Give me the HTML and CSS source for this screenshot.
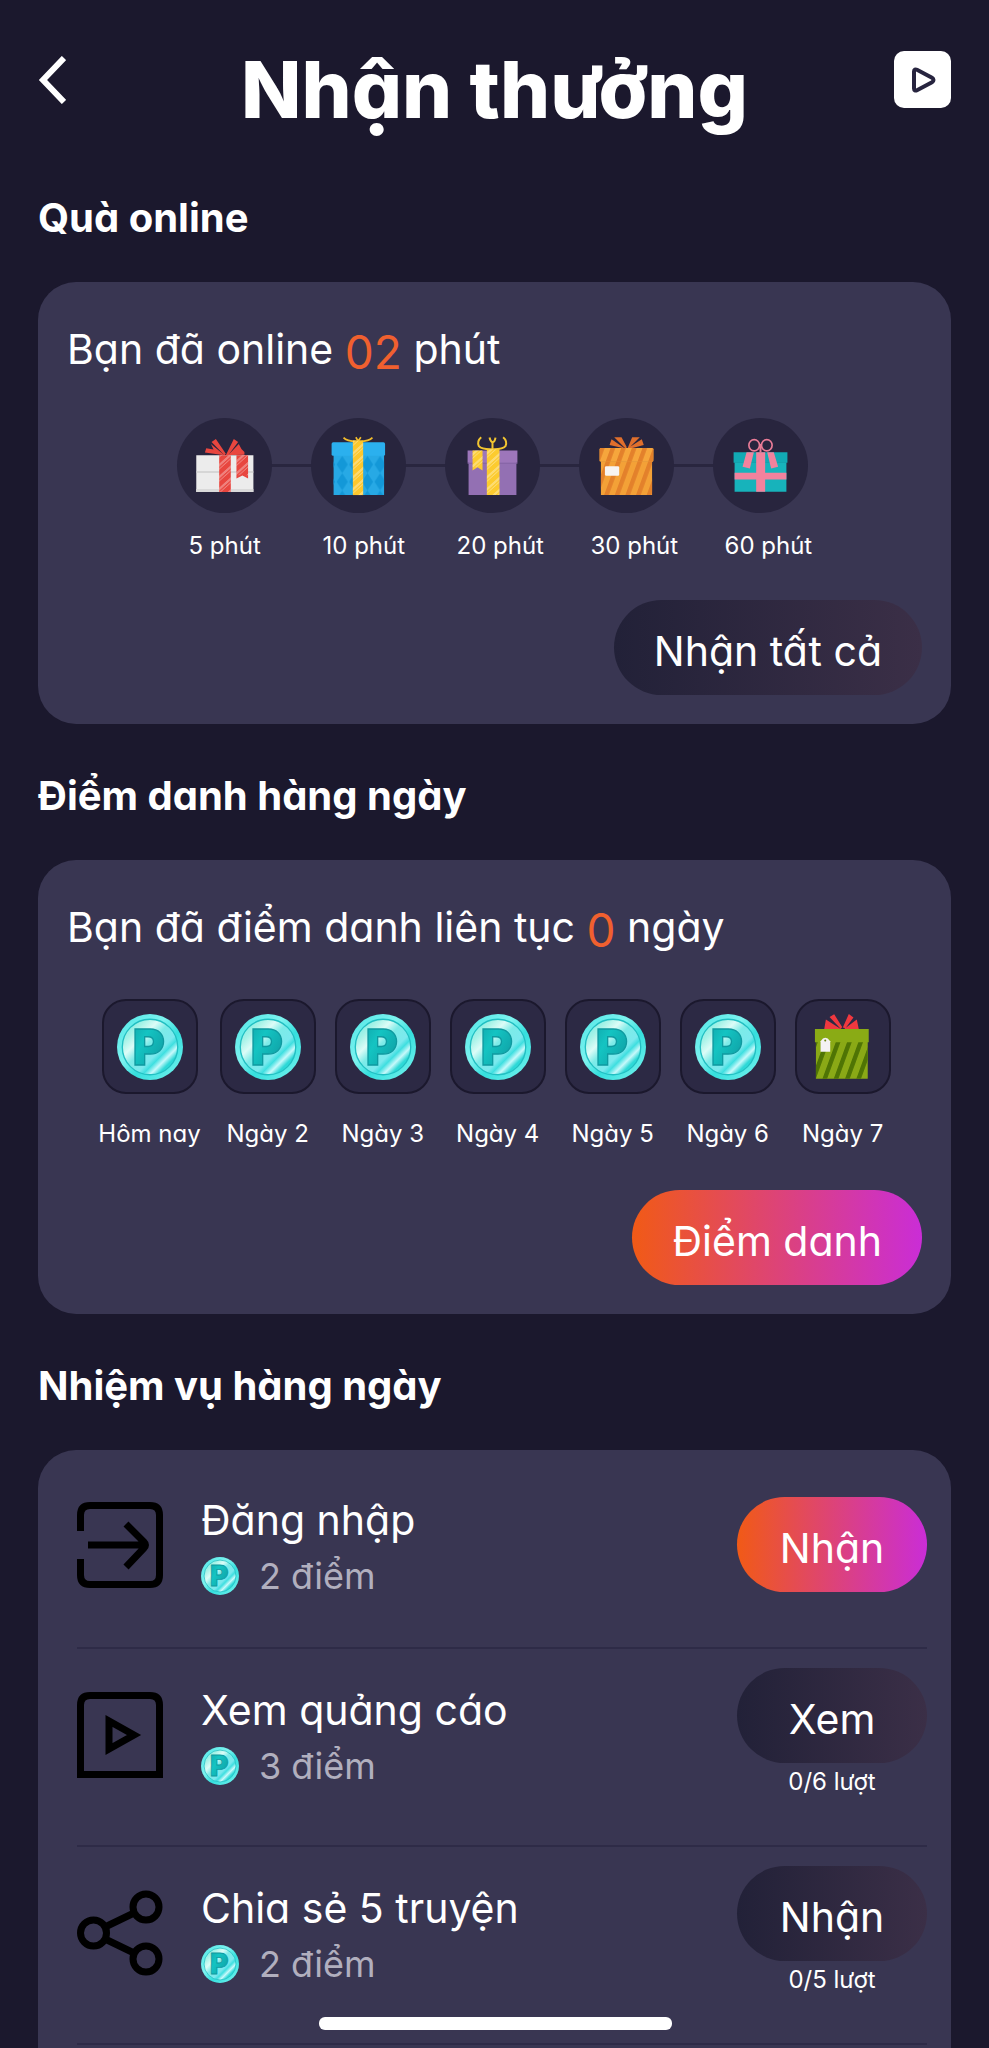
FILE: index.html
```html
<!DOCTYPE html>
<html lang="vi">
<head>
<meta charset="utf-8">
<meta name="viewport" content="width=device-width, initial-scale=1">
<title>Nhận thưởng</title>
<link rel="stylesheet" href="styles.css">
</head>
<body>
<svg class="defs" aria-hidden="true">
  <defs>
    <linearGradient id="coin-face" x1="0" y1="0" x2="1" y2="1">
      <stop offset="0" stop-color="#5fe9e2"/>
      <stop offset=".22" stop-color="#a8f3e8"/>
      <stop offset=".34" stop-color="#dcfcf7"/>
      <stop offset=".46" stop-color="#7cebe8"/>
      <stop offset=".62" stop-color="#7be9ee"/>
      <stop offset=".68" stop-color="#3fdfe0"/>
      <stop offset=".75" stop-color="#c8f9fb"/>
      <stop offset=".82" stop-color="#2bd8d6"/>
      <stop offset="1" stop-color="#54e8e4"/>
    </linearGradient>
    <linearGradient id="coin-rim" x1="0" y1="0" x2="1" y2="1">
      <stop offset="0" stop-color="#4fe6e6"/>
      <stop offset=".4" stop-color="#7df3ef"/>
      <stop offset=".6" stop-color="#35dfdd"/>
      <stop offset="1" stop-color="#7af5f0"/>
    </linearGradient>
    <linearGradient id="coin-letter" x1="0" y1="0" x2="1" y2="1">
      <stop offset="0" stop-color="#0fa5a9"/>
      <stop offset=".35" stop-color="#14c4c2"/>
      <stop offset="1" stop-color="#0d929a"/>
    </linearGradient>
    <pattern id="diamonds" width="38" height="52" patternUnits="userSpaceOnUse" x="75" y="114">
      <path d="M19 0 36 26 19 52 2 26z" fill="#1398d8"/>
    </pattern>
    <pattern id="orange-stripes" width="32" height="40" patternUnits="userSpaceOnUse" patternTransform="skewX(-20)">
      <rect width="14" height="40" fill="#e3812b"/>
    </pattern>
    <pattern id="green-stripes" width="34" height="40" patternUnits="userSpaceOnUse" patternTransform="skewX(-20)">
      <rect width="14" height="40" fill="#4f7404"/>
    </pattern>
    <pattern id="light-stripes" width="40" height="36" patternUnits="userSpaceOnUse" patternTransform="skewY(-42)">
      <rect width="40" height="9" fill="#fff" opacity=".32"/>
      <rect y="14" width="40" height="4" fill="#fff" opacity=".32"/>
    </pattern>
    <symbol id="coin" viewBox="0 0 100 100">
      <circle cx="50" cy="50" r="50" fill="url(#coin-rim)"/>
      <circle cx="50" cy="50" r="42" fill="url(#coin-face)" stroke="#22bfc2" stroke-width="2"/>
      <text x="24" y="77" class="coin-letter" fill="url(#coin-letter)" stroke="#0f9aa0" stroke-width="2">P</text>
    </symbol>
  </defs>
</svg>

<header class="topbar">
  <button class="icon-button" type="button" aria-label="Quay lại">
    <svg class="chevron" viewBox="0 0 28 48"><path d="M26 2 5 24 26 46" fill="none" stroke="#fff" stroke-width="6"/></svg>
  </button>
  <h1 class="title">Nhận thưởng</h1>
  <button class="icon-button icon-button-filled" type="button" aria-label="Video">
    <svg class="play-mini" viewBox="0 0 26 26"><path d="M4 4.500c0-2 1.500-2.500 3-1.800l15 8c2 1.200 2 3.400 0 4.600l-15 8c-1.500.7-3 .2-3-1.800z" fill="#fff" stroke="#27243f" stroke-width="4"/></svg>
  </button>
</header>

<main class="content">
  <h2 class="section-title">Quà online</h2>
  <section class="card">
    <p class="summary">Bạn đã online <span class="count">02</span> phút</p>
    <ul class="timeline">
      <li class="milestone">
        <span class="orb"><svg viewBox="0 0 286 286">
          <path d="M143 112 104 72l13-9 30 45zM143 112 84 104l4-13 22 4-8-17zM147 112l24-49 13 9-28 38 30-32 8 15 9 9v9z" fill="#e8463f"/>
          <path d="M58 112h172v111H58z" fill="#ececec"/><path d="M58 160h172v5H58z" fill="#cfcfcf"/><path d="M58 214h172v9H58z" fill="#dadada"/>
          <path d="M127 112h35v111h-35zM179 112h35v70l-17-9-18 9z" fill="#e8463f"/>
          <path d="M127 112h35v111h-35zM179 112h35v60h-35z" fill="url(#light-stripes)"/>
        </svg></span>
        <span class="milestone-label">5 phút</span>
      </li>
      <li class="milestone">
        <span class="orb"><svg viewBox="0 0 286 286">
          <path d="M98 59q10 12 44 11 32 1 43-11M135 58l7 12 8-12" fill="none" stroke="#f2bd2c" stroke-width="5"/>
          <path d="M68 110h152v122H68z" fill="#27a9e5"/><path d="M68 114h152v118H68z" fill="url(#diamonds)"/>
          <rect x="62" y="73" width="161" height="41" rx="5" fill="#2bb0ee"/>
          <path d="M126 68h31v164h-31z" fill="#fcc72d"/><path d="M126 68h31v164h-31z" fill="url(#light-stripes)"/>
        </svg></span>
        <span class="milestone-label">10 phút</span>
      </li>
      <li class="milestone">
        <span class="orb"><svg viewBox="0 0 286 286">
          <path d="M109 58q-14 12-7 27 8 10 40 9 32 1 40-9 7-15-7-27M134 59q3 13 9 14 7-1 9-14M143 73v22" fill="none" stroke="#f2c530" stroke-width="6"/>
          <path d="M71 130h144v102H71z" fill="#9370b3"/><path d="M68 98h150v37H68z" fill="#9d76ba"/><path d="M68 135h150v3H68z" fill="#8563a4"/>
          <path d="M126 94h38v138h-38zM83 98h30v60l-15-10-15 10z" fill="#fccb2f"/>
          <path d="M126 94h38v138h-38zM83 98h30v50H83z" fill="url(#light-stripes)"/>
        </svg></span>
        <span class="milestone-label">20 phút</span>
      </li>
      <li class="milestone">
        <span class="orb"><svg viewBox="0 0 286 286">
          <path d="M140 92 106 58h22l16 30zM138 92l-46-11 6-17zM146 92l14-34h23l-28 28 34-22 6 17-40 11z" fill="#e06f2c"/>
          <path d="M66 130h154v102H66z" fill="#f3a137"/><path d="M66 130h154v102H66z" fill="url(#orange-stripes)"/>
          <rect x="62" y="90" width="162" height="42" rx="4" fill="#f6a63c"/><rect x="62" y="90" width="162" height="42" rx="4" fill="url(#orange-stripes)"/>
          <rect x="78" y="145" width="43" height="29" rx="4" fill="#f7f4f2"/>
        </svg></span>
        <span class="milestone-label">30 phút</span>
      </li>
      <li class="milestone">
        <span class="orb"><svg viewBox="0 0 286 286">
          <path d="M65 133h156v89H65z" fill="#17b3bb"/><path d="M62 103h162v32H62z" fill="#12aab4"/>
          <path d="M65 165h156v20H65zM130 103h27v119h-27zM101 103h22l-12 49-22-5zM163 103h20l13 44-21 5z" fill="#f2829d"/>
          <ellipse cx="124" cy="82" rx="16" ry="17" fill="none" stroke="#ea7c97" stroke-width="5"/><ellipse cx="162" cy="82" rx="16" ry="17" fill="none" stroke="#ea7c97" stroke-width="5"/><path d="M143 78v26" stroke="#ea7c97" stroke-width="6"/>
        </svg></span>
        <span class="milestone-label">60 phút</span>
      </li>
    </ul>
    <div class="card-action"><button class="pill pill-muted" type="button">Nhận tất cả</button></div>
  </section>

  <h2 class="section-title">Điểm danh hàng ngày</h2>
  <section class="card">
    <p class="summary">Bạn đã điểm danh liên tục <span class="count">0</span> ngày</p>
    <ul class="days">
      <li class="day"><span class="tile"><svg class="coin-large"><use href="#coin"/></svg></span><span>Hôm nay</span></li>
      <li class="day"><span class="tile"><svg class="coin-large"><use href="#coin"/></svg></span><span>Ngày 2</span></li>
      <li class="day"><span class="tile"><svg class="coin-large"><use href="#coin"/></svg></span><span>Ngày 3</span></li>
      <li class="day"><span class="tile"><svg class="coin-large"><use href="#coin"/></svg></span><span>Ngày 4</span></li>
      <li class="day"><span class="tile"><svg class="coin-large"><use href="#coin"/></svg></span><span>Ngày 5</span></li>
      <li class="day"><span class="tile"><svg class="coin-large"><use href="#coin"/></svg></span><span>Ngày 6</span></li>
      <li class="day"><span class="tile"><svg class="tile-gift" viewBox="0 0 286 286">
        <path d="M138 90 104 54l14-8 24 38zM138 90H88l5-28zM144 86l18-41 14 11-24 32zM148 90l38-28 6 28z" fill="#f0383f"/>
        <path d="M63 128h156v112H63z" fill="#8aa916"/><path d="M63 128h156v112H63z" fill="url(#green-stripes)"/>
        <path d="M60 90h162v40H60z" fill="#8aab15"/>
        <path d="M77 127q14-20 29 0v32H77z" fill="#f4f2f4"/><circle cx="91" cy="125" r="3" fill="#6d8412"/>
      </svg></span><span>Ngày 7</span></li>
    </ul>
    <div class="card-action"><button class="pill pill-active" type="button">Điểm danh</button></div>
  </section>

  <h2 class="section-title">Nhiệm vụ hàng ngày</h2>
  <section class="card card-tasks">
    <ul class="tasks">
      <li class="task">
        <svg class="task-icon" viewBox="0 0 86 86"><path d="M3.500 29V13q0-9.500 9.500-9.500h60q9.500 0 9.500 9.500v60q0 9.500-9.500 9.500H13q-9.500 0-9.500-9.500V57" class="line"/><path d="M11 43h56M49 22l18 18q3 3 0 6L49 65" class="line"/></svg>
        <div class="task-text">
          <h3 class="task-name">Đăng nhập</h3>
          <p class="reward"><svg class="coin-small"><use href="#coin"/></svg>2 điểm</p>
        </div>
        <div class="task-side"><button class="pill pill-task pill-active" type="button">Nhận</button></div>
      </li>
      <li class="task">
        <svg class="task-icon" viewBox="0 0 86 86"><path d="M3.500 82.500V13q0-9.500 9.500-9.500h60q9.500 0 9.500 9.500v69.500z" class="line"/><path d="M32 29v28l25-14z" class="line"/></svg>
        <div class="task-text">
          <h3 class="task-name">Xem quảng cáo</h3>
          <p class="reward"><svg class="coin-small"><use href="#coin"/></svg>3 điểm</p>
        </div>
        <div class="task-side"><button class="pill pill-task pill-muted" type="button">Xem</button><span class="quota">0/6 lượt</span></div>
      </li>
      <li class="task">
        <svg class="task-icon" viewBox="0 0 86 86"><g class="line"><circle cx="16.500" cy="43" r="13"/><circle cx="69" cy="17" r="13"/><circle cx="69" cy="69" r="13"/><path d="M28 37 57 23M28 49l29 14"/></g></svg>
        <div class="task-text">
          <h3 class="task-name">Chia sẻ 5 truyện</h3>
          <p class="reward"><svg class="coin-small"><use href="#coin"/></svg>2 điểm</p>
        </div>
        <div class="task-side"><button class="pill pill-task pill-muted" type="button">Nhận</button><span class="quota">0/5 lượt</span></div>
      </li>
    </ul>
  </section>
</main>
<div class="home-indicator"></div>
</body>
</html>
```

FILE: styles.css
```css
* { box-sizing: border-box; }

body {
  display: flex;
  flex-direction: column;
  min-height: 100vh;
  margin: 0;
  background: #1b182d;
  color: #fff;
  font-family: Inter, "Noto Sans", sans-serif;
  font-feature-settings: "cv11";
  font-size: 24px;
  line-height: 32px;
}

h1, h2, h3, p, ul { margin: 0; padding: 0; }
ul { list-style: none; }
svg { display: block; }
button { border: 0; padding: 0; color: inherit; font: inherit; font-feature-settings: inherit; cursor: pointer; }

.defs { position: absolute; width: 0; height: 0; }

.topbar {
  display: grid;
  grid-template-columns: 57px 1fr 57px;
  padding: 41px 38px 9px;
}

.title {
  font-size: 79px;
  font-weight: 800;
  line-height: 96px;
  text-align: center;
}

.icon-button {
  display: flex;
  align-items: center;
  width: 57px;
  height: 57px;
  margin-top: 10px;
  background: none;
}

.icon-button-filled {
  justify-content: center;
  border-radius: 10px;
  background: #fff;
}

.chevron { width: 28px; height: 48px; }
.play-mini { width: 26px; height: 26px; }

.content {
  display: flex;
  flex: 1;
  flex-direction: column;
  padding: 0 38px;
}

.section-title {
  padding: 45px 0 37px;
  font-size: 40px;
  font-weight: 700;
  line-height: 54px;
}

.card {
  padding: 40px 29px 29px;
  border-radius: 38px;
  background: #393652;
}

.summary {
  font-size: 41px;
  line-height: 54px;
}

.count {
  color: #f0602f;
  font-size: 46px;
  line-height: 46px;
  vertical-align: -5px;
}

.timeline {
  display: flex;
  justify-content: center;
  gap: 39px;
  margin: 42px 0 38px;
  padding-right: 5px;
}

.milestone { position: relative; width: 95px; }

.milestone + .milestone::before {
  content: "";
  position: absolute;
  top: 46px;
  left: -39px;
  width: 39px;
  height: 3px;
  background: #29263f;
}

.orb {
  display: block;
  width: 95px;
  height: 95px;
  border-radius: 50%;
  background: #28253e;
}

.milestone-label {
  display: block;
  margin-top: 17px;
  padding-left: 12px;
  white-space: nowrap;
}

.card-action {
  display: flex;
  justify-content: flex-end;
}

.pill {
  height: 95px;
  padding: 6px 40px 0;
  border-radius: 48px;
  font-size: 41px;
  line-height: 54px;
}

.pill-muted { background: linear-gradient(90deg, #222138, #3b2f47); }
.pill-active { background: linear-gradient(90deg, #f15a16, #e04768 42%, #ca2dd6); }

.days {
  display: flex;
  justify-content: center;
  gap: 19px;
  margin: 45px 0 40px;
}

.day {
  display: flex;
  flex-direction: column;
  align-items: center;
  gap: 24px;
}

.tile {
  display: flex;
  align-items: center;
  justify-content: center;
  width: 96px;
  height: 95px;
  border: 2px solid #1b182d;
  border-radius: 24px;
  background: #2c2944;
}

.coin-large { width: 66px; height: 66px; }
.tile-gift { width: 95px; height: 95px; flex: none; }
.coin-small { width: 38px; height: 38px; }
.coin-letter { font: 900 74px Inter, sans-serif; }

.card-tasks {
  flex: 1;
  padding: 17px 24px 0 39px;
  border-radius: 38px 38px 0 0;
}

.task {
  display: grid;
  grid-template-columns: 86px 1fr 190px;
  column-gap: 38px;
  align-items: center;
  padding: 19px 0 44px;
  border-bottom: 2px solid #2e2b47;
}

.task-icon { width: 86px; height: 86px; }
.line { fill: none; stroke: #000; stroke-width: 7; }
.task-text { padding-top: 10px; }

.task-name {
  font-size: 41px;
  font-weight: 400;
  line-height: 48px;
}

.reward {
  display: flex;
  align-items: center;
  gap: 20px;
  margin-top: 5px;
  color: #b1afbe;
  font-size: 36px;
  line-height: 54px;
}

.task-side { text-align: center; }
.pill-task { display: block; width: 190px; padding: 6px 0 0; }

.quota {
  display: block;
  line-height: 38px;
}

.home-indicator {
  position: fixed;
  bottom: 18px;
  left: 50%;
  width: 353px;
  height: 13px;
  margin-left: -176px;
  border-radius: 6px;
  background: #fff;
}
```
